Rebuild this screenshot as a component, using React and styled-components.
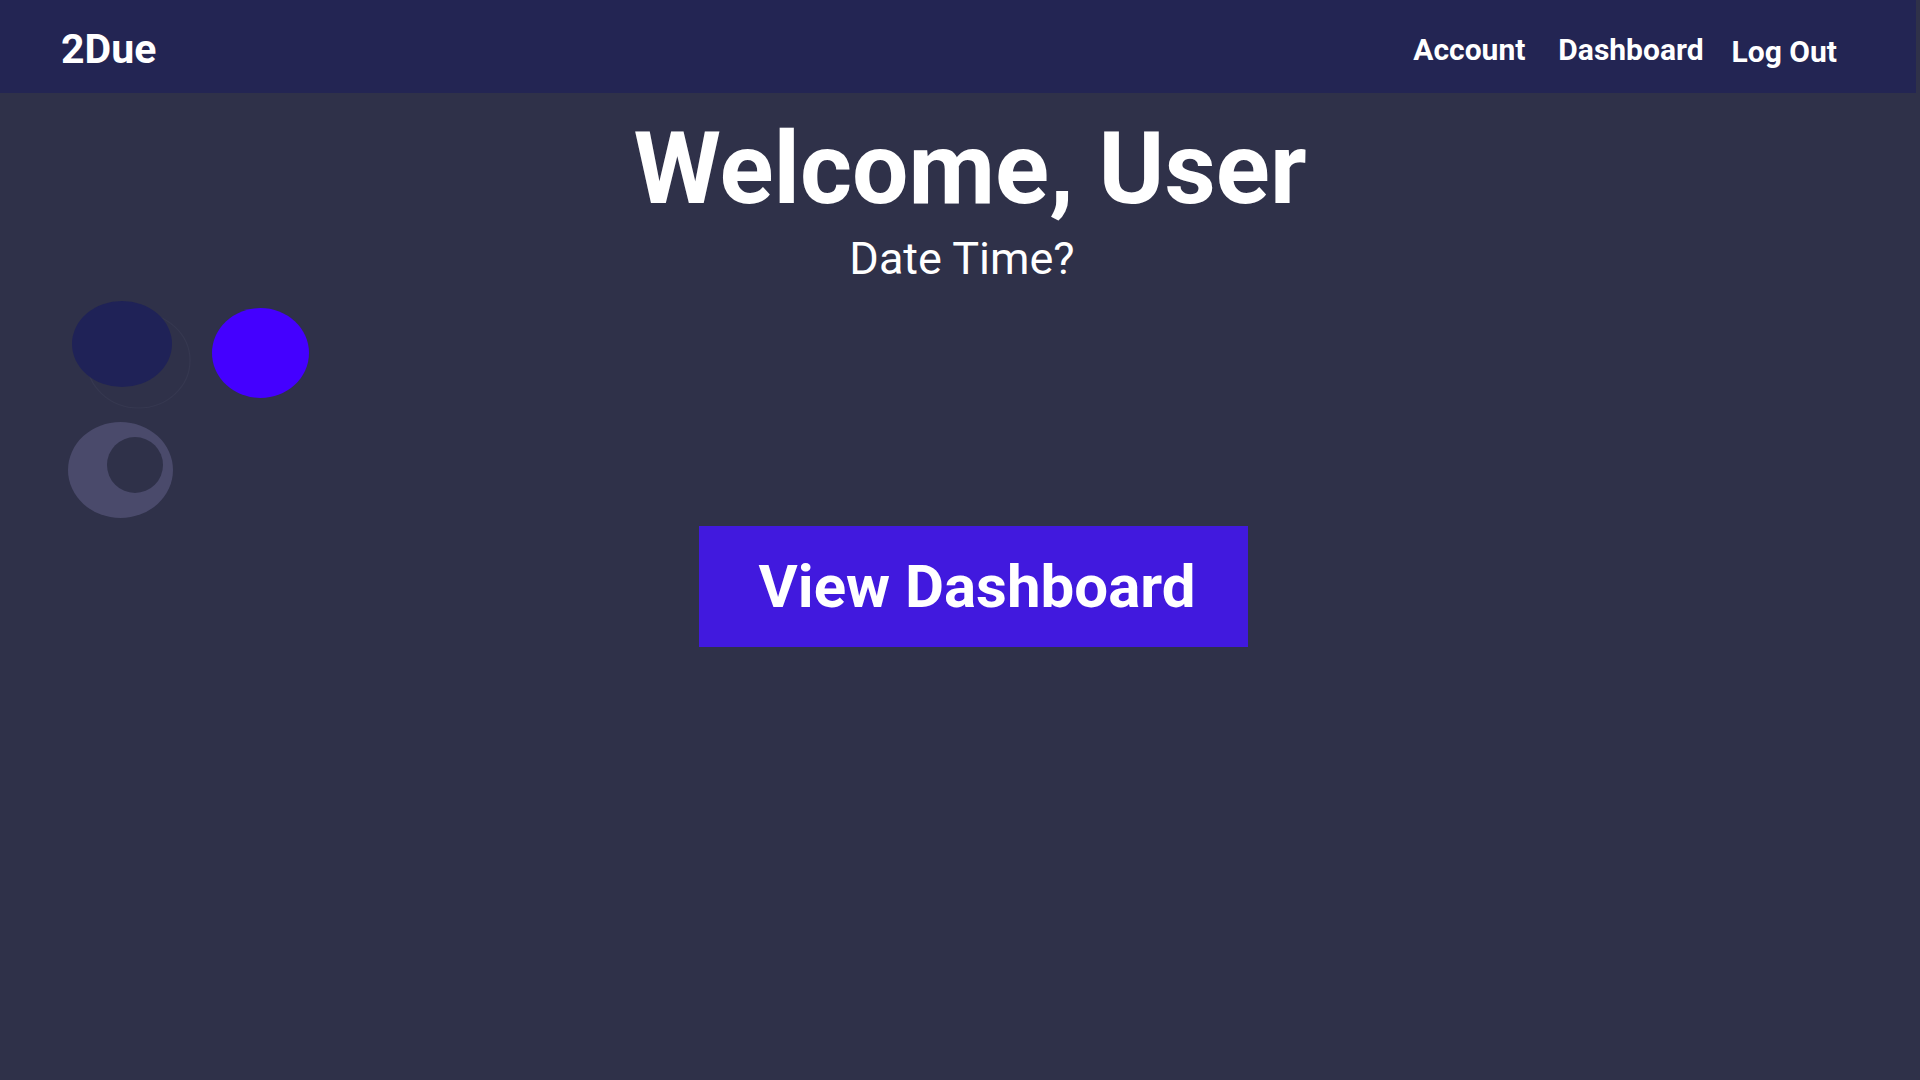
import React from 'react';
import styled, { createGlobalStyle } from 'styled-components';

const GlobalStyle = createGlobalStyle`
  html, body {
    margin: 0;
    padding: 0;
    background-color: #2f3149;
    min-height: 100vh;
  }

  body {
    font-family: Roboto, "Liberation Sans", sans-serif;
    color: #ffffff;
  }
`;

const NavBar = styled.nav`
  box-sizing: border-box;
  height: 93px;
  margin-right: 4px;
  padding: 5px 79px 0 61px;
  background-color: #232553;
  display: flex;
  flex-direction: row;
  align-items: center;
  justify-content: space-between;
`;

const Logo = styled.div`
  font-size: 41px;
  font-weight: 700;
`;

const NavLinks = styled.div`
  display: flex;
  flex-direction: row;
  align-items: center;
`;

const NavLink = styled.a`
  margin-left: ${(p) => p.$space || 0}px;
  padding-top: ${(p) => (p.$drop ? 4 : 0)}px;
  font-size: 30px;
  font-weight: 700;
  color: #ffffff;
  text-decoration: none;
  cursor: pointer;
`;

const Main = styled.main`
  display: flex;
  flex-direction: column;
`;

const Title = styled.h1`
  margin: 17px 0 0;
  padding-left: 20px;
  text-align: center;
  font-size: 100px;
  font-weight: 700;
  line-height: normal;
`;

const SubTitle = styled.div`
  margin-top: 5px;
  padding-left: 4px;
  text-align: center;
  font-size: 45px;
  font-weight: 400;
`;

const Blobs = styled.svg`
  display: block;
  margin: 10px 0 0 55px;
`;

const ButtonRow = styled.div`
  display: flex;
  justify-content: center;
  margin-top: 1px;
  padding-left: 27px;
`;

const BigButton = styled.button`
  padding: 25px 53px 25px 60px;
  border: none;
  background-color: #4119de;
  color: #ffffff;
  font-family: Roboto, "Liberation Sans", sans-serif;
  font-size: 60px;
  font-weight: 700;
  line-height: normal;
  cursor: pointer;

  &:hover {
    background-color: #4a22ea;
  }
`;

function App() {
  return (
    <>
      <GlobalStyle />
      <NavBar>
        <Logo>2Due</Logo>
        <NavLinks>
          <NavLink>Account</NavLink>
          <NavLink $space={33}>Dashboard</NavLink>
          <NavLink $space={28} $drop>Log Out</NavLink>
        </NavLinks>
      </NavBar>
      <Main>
        <Title>Welcome, User</Title>
        <SubTitle>Date Time?</SubTitle>
        <Blobs width="270" height="230" viewBox="0 0 270 230">
          <ellipse cx="83.5" cy="65.5" rx="51.5" ry="47.5" fill="none" stroke="#363850" strokeWidth="1.2" />
          <ellipse cx="67" cy="49" rx="50" ry="43" fill="#1f2257" />
          <ellipse cx="205.5" cy="58" rx="48.5" ry="45" fill="#4400ff" />
          <ellipse cx="65.5" cy="175" rx="52.5" ry="48" fill="#4a4a6b" />
          <circle cx="80" cy="170" r="28" fill="#2f3149" />
        </Blobs>
        <ButtonRow>
          <BigButton>View Dashboard</BigButton>
        </ButtonRow>
      </Main>
    </>
  );
}

export default App;
